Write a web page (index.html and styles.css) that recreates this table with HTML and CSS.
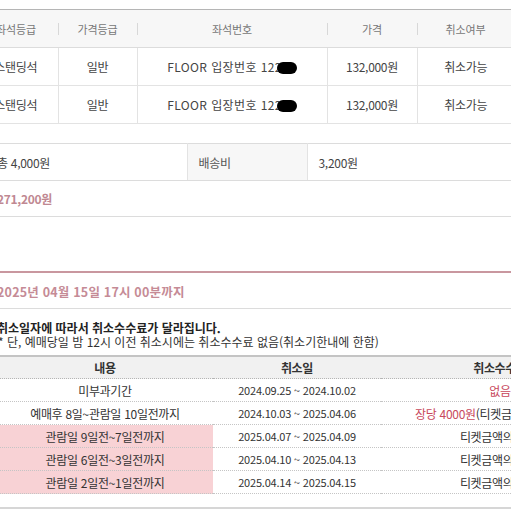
FILE: index.html
```html
<!DOCTYPE html>
<html lang="ko">
<head>
<meta charset="utf-8">
<link rel="stylesheet" href="styles.css">
</head>
<body>
<div class="page">
  <table class="seats">
    <colgroup><col class="c1"><col class="c2"><col class="c3"><col class="c4"><col class="c5"></colgroup>
    <thead>
      <tr><th class="first">좌석등급</th><th>가격등급</th><th>좌석번호</th><th>가격</th><th>취소여부</th></tr>
    </thead>
    <tbody>
      <tr><td class="first">스탠딩석</td><td>일반</td><td class="seatno">FLOOR 입장번호 122<span class="redact">00</span></td><td>132,000원</td><td>취소가능</td></tr>
      <tr><td class="first">스탠딩석</td><td>일반</td><td class="seatno">FLOOR 입장번호 122<span class="redact">00</span></td><td>132,000원</td><td>취소가능</td></tr>
    </tbody>
  </table>

  <table class="summary">
    <colgroup><col class="s1"><col class="s2"><col class="s3"></colgroup>
    <tr class="srow1"><td class="fee">총 4,000원</td><th>배송비</th><td class="ship">3,200원</td></tr>
    <tr class="srow2"><td colspan="3" class="total">271,200원</td></tr>
  </table>

  <div class="deadline">2025년 04월 15일 17시 00분까지</div>

  <div class="notice">
    <p class="strong">취소일자에 따라서 취소수수료가 달라집니다.</p>
    <p>* 단, 예매당일 밤 12시 이전 취소시에는 취소수수료 없음(취소기한내에 한함)</p>
  </div>

  <table class="fees">
    <colgroup><col class="f1"><col class="f2"><col class="f3"></colgroup>
    <thead>
      <tr><th>내용</th><th>취소일</th><th>취소수수료</th></tr>
    </thead>
    <tbody>
      <tr><td>미부과기간</td><td class="date">2024.09.25 ~ 2024.10.02</td><td><span class="red">없음</span></td></tr>
      <tr><td>예매후 8일~관람일 10일전까지</td><td class="date">2024.10.03 ~ 2025.04.06</td><td><span class="red">장당 4000원</span>(티켓금액의 10%한도)</td></tr>
      <tr class="hl"><td>관람일 9일전~7일전까지</td><td class="date">2025.04.07 ~ 2025.04.09</td><td>티켓금액의 10%</td></tr>
      <tr class="hl"><td>관람일 6일전~3일전까지</td><td class="date">2025.04.10 ~ 2025.04.13</td><td>티켓금액의 20%</td></tr>
      <tr class="hl"><td>관람일 2일전~1일전까지</td><td class="date">2025.04.14 ~ 2025.04.15</td><td>티켓금액의 30%</td></tr>
    </tbody>
  </table>
  <div class="endline"></div>
</div>
</body>
</html>
```

FILE: styles.css
```css
html, body {
  margin: 0;
  padding: 0;
  background: #fff;
  overflow: hidden;
}
body {
  font-family: "Noto Sans CJK KR", "Noto Sans", sans-serif;
  color: #333;
  font-size: 12px;
  letter-spacing: -0.3px;
}
.page {
  width: 511px;
  padding-top: 9px;
}
table {
  border-collapse: collapse;
  table-layout: fixed;
}

/* seat table */
.seats {
  width: 540px;
  margin-left: -26px;
  border-top: 1px solid #b5b5b5;
}
.seats .c1 { width: 84px; }
.seats .c2 { width: 79px; }
.seats .c3 { width: 190px; }
.seats .c4 { width: 90px; }
.seats .c5 { width: 97px; }
.seats th {
  height: 37px;
  padding: 0;
  font-weight: normal;
  font-size: 11px;
  letter-spacing: -0.1px;
  color: #777;
  background: linear-gradient(#d8d8d8, #d8d8d8) left center / 1px 12px no-repeat, #f7f7f7;
  border-bottom: 1px solid #dcdcdc;
}
.seats th.first {
  background: #f7f7f7;
}
.seats td {
  height: 37px;
  padding: 0;
  text-align: center;
  color: #444;
  border-bottom: 1px solid #e3e3e3;
  border-left: 1px solid #e3e3e3;
}
.seats td.first { border-left: none; }
.seats td.seatno {
  letter-spacing: 0.4px;
  white-space: nowrap;
}
.redact {
  display: inline-block;
  width: 20px;
  height: 12px;
  margin-left: -5px;
  background: #000;
  color: #000;
  border-radius: 6px;
  vertical-align: -2px;
  overflow: hidden;
  font-size: 8px;
  line-height: 12px;
}

/* summary */
.summary {
  width: 540px;
  margin-left: -3px;
  margin-top: 19px;
  border-top: 1px solid #dcdcdc;
}
.summary .s1 { width: 190px; }
.summary .s2 { width: 120px; }
.summary .s3 { width: 230px; }
.summary td, .summary th {
  padding: 0;
  text-align: left;
}
.srow1 td, .srow1 th {
  height: 36px;
  border-bottom: 1px solid #dcdcdc;
}
.summary th {
  font-weight: normal;
  color: #555;
  background: #f7f7f7;
  padding-left: 11px;
  border-left: 1px solid #e3e3e3;
  border-right: 1px solid #e3e3e3;
}
.summary .ship { padding-left: 11px; color: #444; }
.summary .fee { color: #444; }
.srow2 td {
  height: 35px;
  border-bottom: 1px solid #dcdcdc;
  font-weight: bold;
  color: #c08892;
}

/* deadline */
.deadline {
  margin-top: 54px;
  margin-left: -3px;
  border-top: 2px solid #c9979f;
  border-bottom: 1px solid #dcdcdc;
  height: 35px;
  line-height: 37px;
  font-size: 12.5px;
  letter-spacing: 0.2px;
  font-weight: bold;
  color: #c58b96;
  white-space: nowrap;
}

/* notice */
.notice {
  margin-top: 12px;
  margin-left: -2px;
}
.notice p {
  margin: 0;
  line-height: 14px;
  font-size: 12px;
  letter-spacing: 0;
  white-space: nowrap;
}
.notice .strong {
  font-weight: bold;
  color: #222;
  margin-left: -1px;
}

/* fee table */
.fees {
  width: 622px;
  margin-left: -3px;
  margin-top: 6px;
  border-top: 2px solid #c4c4c4;
}
.fees .f1 { width: 216px; }
.fees .f2 { width: 168px; }
.fees .f3 { width: 238px; }
.fees th {
  height: 21px;
  padding: 0;
  background: #f1f1f1;
  font-weight: bold;
  color: #333;
  border-bottom: 1px dotted #b5b5b5;
}
.fees td {
  height: 22px;
  padding: 0;
  text-align: center;
  color: #333;
  white-space: nowrap;
  border-bottom: 1px dotted #c5c5c5;
}
.fees td.date {
  font-size: 11px;
  letter-spacing: -0.2px;
}
.fees .hl td:first-child {
  background: #f8d2d5;
}
.red { color: #c8485c; }
.endline {
  margin-top: 13px;
  border-top: 2px solid #d6d6d6;
}
```
